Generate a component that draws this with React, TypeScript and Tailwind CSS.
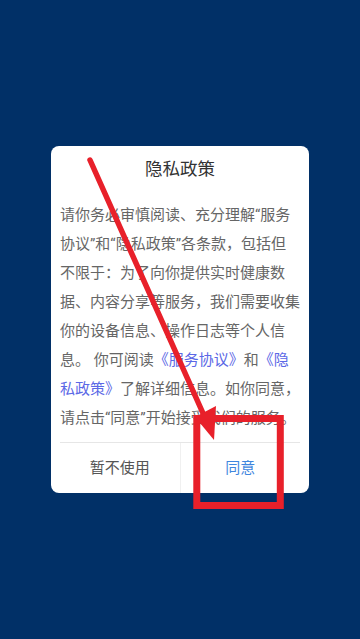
import React from "react";

const L = "text-[#5b68e6]";

export default function App() {
  const font = { fontFamily: 'Roboto, "Noto Sans CJK SC", sans-serif' };
  const lines: React.ReactNode[] = [
    "请你务必审慎阅读、充分理解“服务",
    "协议”和“隐私政策”各条款，包括但",
    "不限于：为了向你提供实时健康数",
    "据、内容分享等服务，我们需要收集",
    "你的设备信息、操作日志等个人信",
    <>
      息。 你可阅读<span className={L}>《服务协议》</span>和<span className={L}>《隐</span>
    </>,
    <>
      <span className={L}>私政策》</span>了解详细信息。如你同意，
    </>,
    "请点击“同意”开始接受我们的服务。",
  ];
  return (
    <div
      className="relative w-[360px] h-[639px] bg-[#013067] flex items-center justify-center overflow-hidden"
      style={font}
    >
      <div className="w-[258px] h-[347px] bg-white rounded-[8px] flex flex-col pt-[11px] px-[9px]">
        <div className="text-center text-[17.5px] leading-[24px] text-[#333333]">隐私政策</div>
        <div className="mt-[20px] text-[15px] leading-[29px] text-[#666666] h-[232px] flex flex-col">
          {lines.map((l, i) => (
            <div key={i} className="whitespace-nowrap">
              {l}
            </div>
          ))}
        </div>
        <div className="mt-[9px] border-t border-[#e6e6e6] flex h-[51px]">
          <div className="flex-1 flex items-center justify-center text-[15px] text-[#555555] border-r border-[#f0f0f0]">
            暂不使用
          </div>
          <div className="flex-1 flex items-center justify-center text-[15px] text-[#3f86de]">
            同意
          </div>
        </div>
      </div>
      <svg
        className="absolute inset-0 pointer-events-none"
        width="360"
        height="639"
        viewBox="0 0 360 639"
      >
        <line x1="90" y1="160" x2="206" y2="420" stroke="#e8202a" strokeWidth="5.5" strokeLinecap="round" />
        <polygon points="214,440 195,417 216,406" fill="#e8202a" />
        <rect x="196.8" y="418.5" width="83.5" height="87" fill="none" stroke="#e8202a" strokeWidth="7" />
      </svg>
    </div>
  );
}
